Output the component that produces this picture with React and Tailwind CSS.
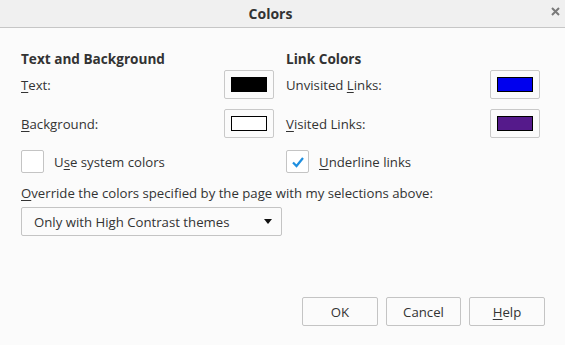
import React from "react";

const font = { fontFamily: '"Open Sans", "Noto Sans", sans-serif' };

function ColorBtn({ color }) {
  return (
    <div className="w-[50px] h-[29px] border border-[#c9c9c9] rounded-[2px] bg-[#fbfbfb] flex items-center justify-center">
      <div className="w-[36px] h-[15px] border border-black" style={{ backgroundColor: color }} />
    </div>
  );
}

function Row({ label, color }) {
  return (
    <div className="flex items-center justify-between h-[29px]">
      <span>{label}</span>
      <ColorBtn color={color} />
    </div>
  );
}

function Check({ checked, label }) {
  return (
    <div className="flex items-center h-[23px]">
      <div className="w-[23px] h-[23px] border border-[#c4c4c4] rounded-[2px] bg-white flex items-center justify-center">
        {checked && (
          <svg width="14" height="12" viewBox="0 0 14 12">
            <path d="M2 6.5 L5.5 10 L12 2" fill="none" stroke="#1e8fe0" strokeWidth="2.2" />
          </svg>
        )}
      </div>
      <span className="ml-[10px]">{label}</span>
    </div>
  );
}

const U = ({ children }) => <span className="underline underline-offset-2 decoration-1">{children}</span>;

export default function App() {
  return (
    <div className="w-[565px] h-[345px] bg-[#fbfbfb] text-[#333] text-[13.2px] leading-[16px] flex flex-col" style={font}>
      <div className="h-[28px] bg-[#f0f0f0] border-b border-[#c6c6c6] flex items-center relative shrink-0 pr-[24px]">
        <div className="w-full text-center font-bold text-[#333] text-[14px]">Colors</div>
        <div className="absolute right-[5px] top-[7px] w-[9px] h-[9px]">
          <svg width="9" height="9" viewBox="0 0 9 9">
            <path d="M1 1 L8 8 M8 1 L1 8" stroke="#7a7a7a" strokeWidth="2" />
          </svg>
        </div>
      </div>
      <div className="flex-1 flex flex-col pl-[21px] pr-[20px] pt-[23px] pb-[19px]">
        <div className="flex gap-[12px]">
          <div className="w-[253px] flex flex-col">
            <div className="font-bold h-[16px] text-[13.6px]">Text and Background</div>
            <div className="mt-[3px]"><Row label={<><U>T</U>ext:</>} color="#000000" /></div>
            <div className="mt-[10px]"><Row label={<><U>B</U>ackground:</>} color="#ffffff" /></div>
            <div className="mt-[12px]"><Check label={<>U<U>s</U>e system colors</>} /></div>
          </div>
          <div className="w-[254px] flex flex-col">
            <div className="font-bold h-[16px] text-[13.6px]">Link Colors</div>
            <div className="mt-[3px]"><Row label={<>Unvisited <U>L</U>inks:</>} color="#0000ee" /></div>
            <div className="mt-[10px]"><Row label={<><U>V</U>isited Links:</>} color="#551a8b" /></div>
            <div className="mt-[12px]"><Check checked label={<><U>U</U>nderline links</>} /></div>
          </div>
        </div>
        <div className="mt-[12px] h-[16px]"><U>O</U>verride the colors specified by the page with my selections above:</div>
        <div className="mt-[6px] w-[261px] h-[29px] border border-[#c4c4c4] rounded-[2px] bg-[#fbfbfb] flex items-center justify-between pl-[12px] pr-[9px]">
          <span>Only with High Contrast themes</span>
          <svg width="8" height="5" viewBox="0 0 8 5"><path d="M0 0 L8 0 L4 5 Z" fill="#111" /></svg>
        </div>
        <div className="flex-1" />
        <div className="flex justify-end gap-[8px]">
          <div className="w-[76px] h-[29px] border border-[#c4c4c4] rounded-[2px] bg-[#fbfbfb] flex items-center justify-center">OK</div>
          <div className="w-[75px] h-[29px] border border-[#c4c4c4] rounded-[2px] bg-[#fbfbfb] flex items-center justify-center">Cancel</div>
          <div className="w-[76px] h-[29px] border border-[#c4c4c4] rounded-[2px] bg-[#fbfbfb] flex items-center justify-center"><span><U>H</U>elp</span></div>
        </div>
      </div>
    </div>
  );
}
